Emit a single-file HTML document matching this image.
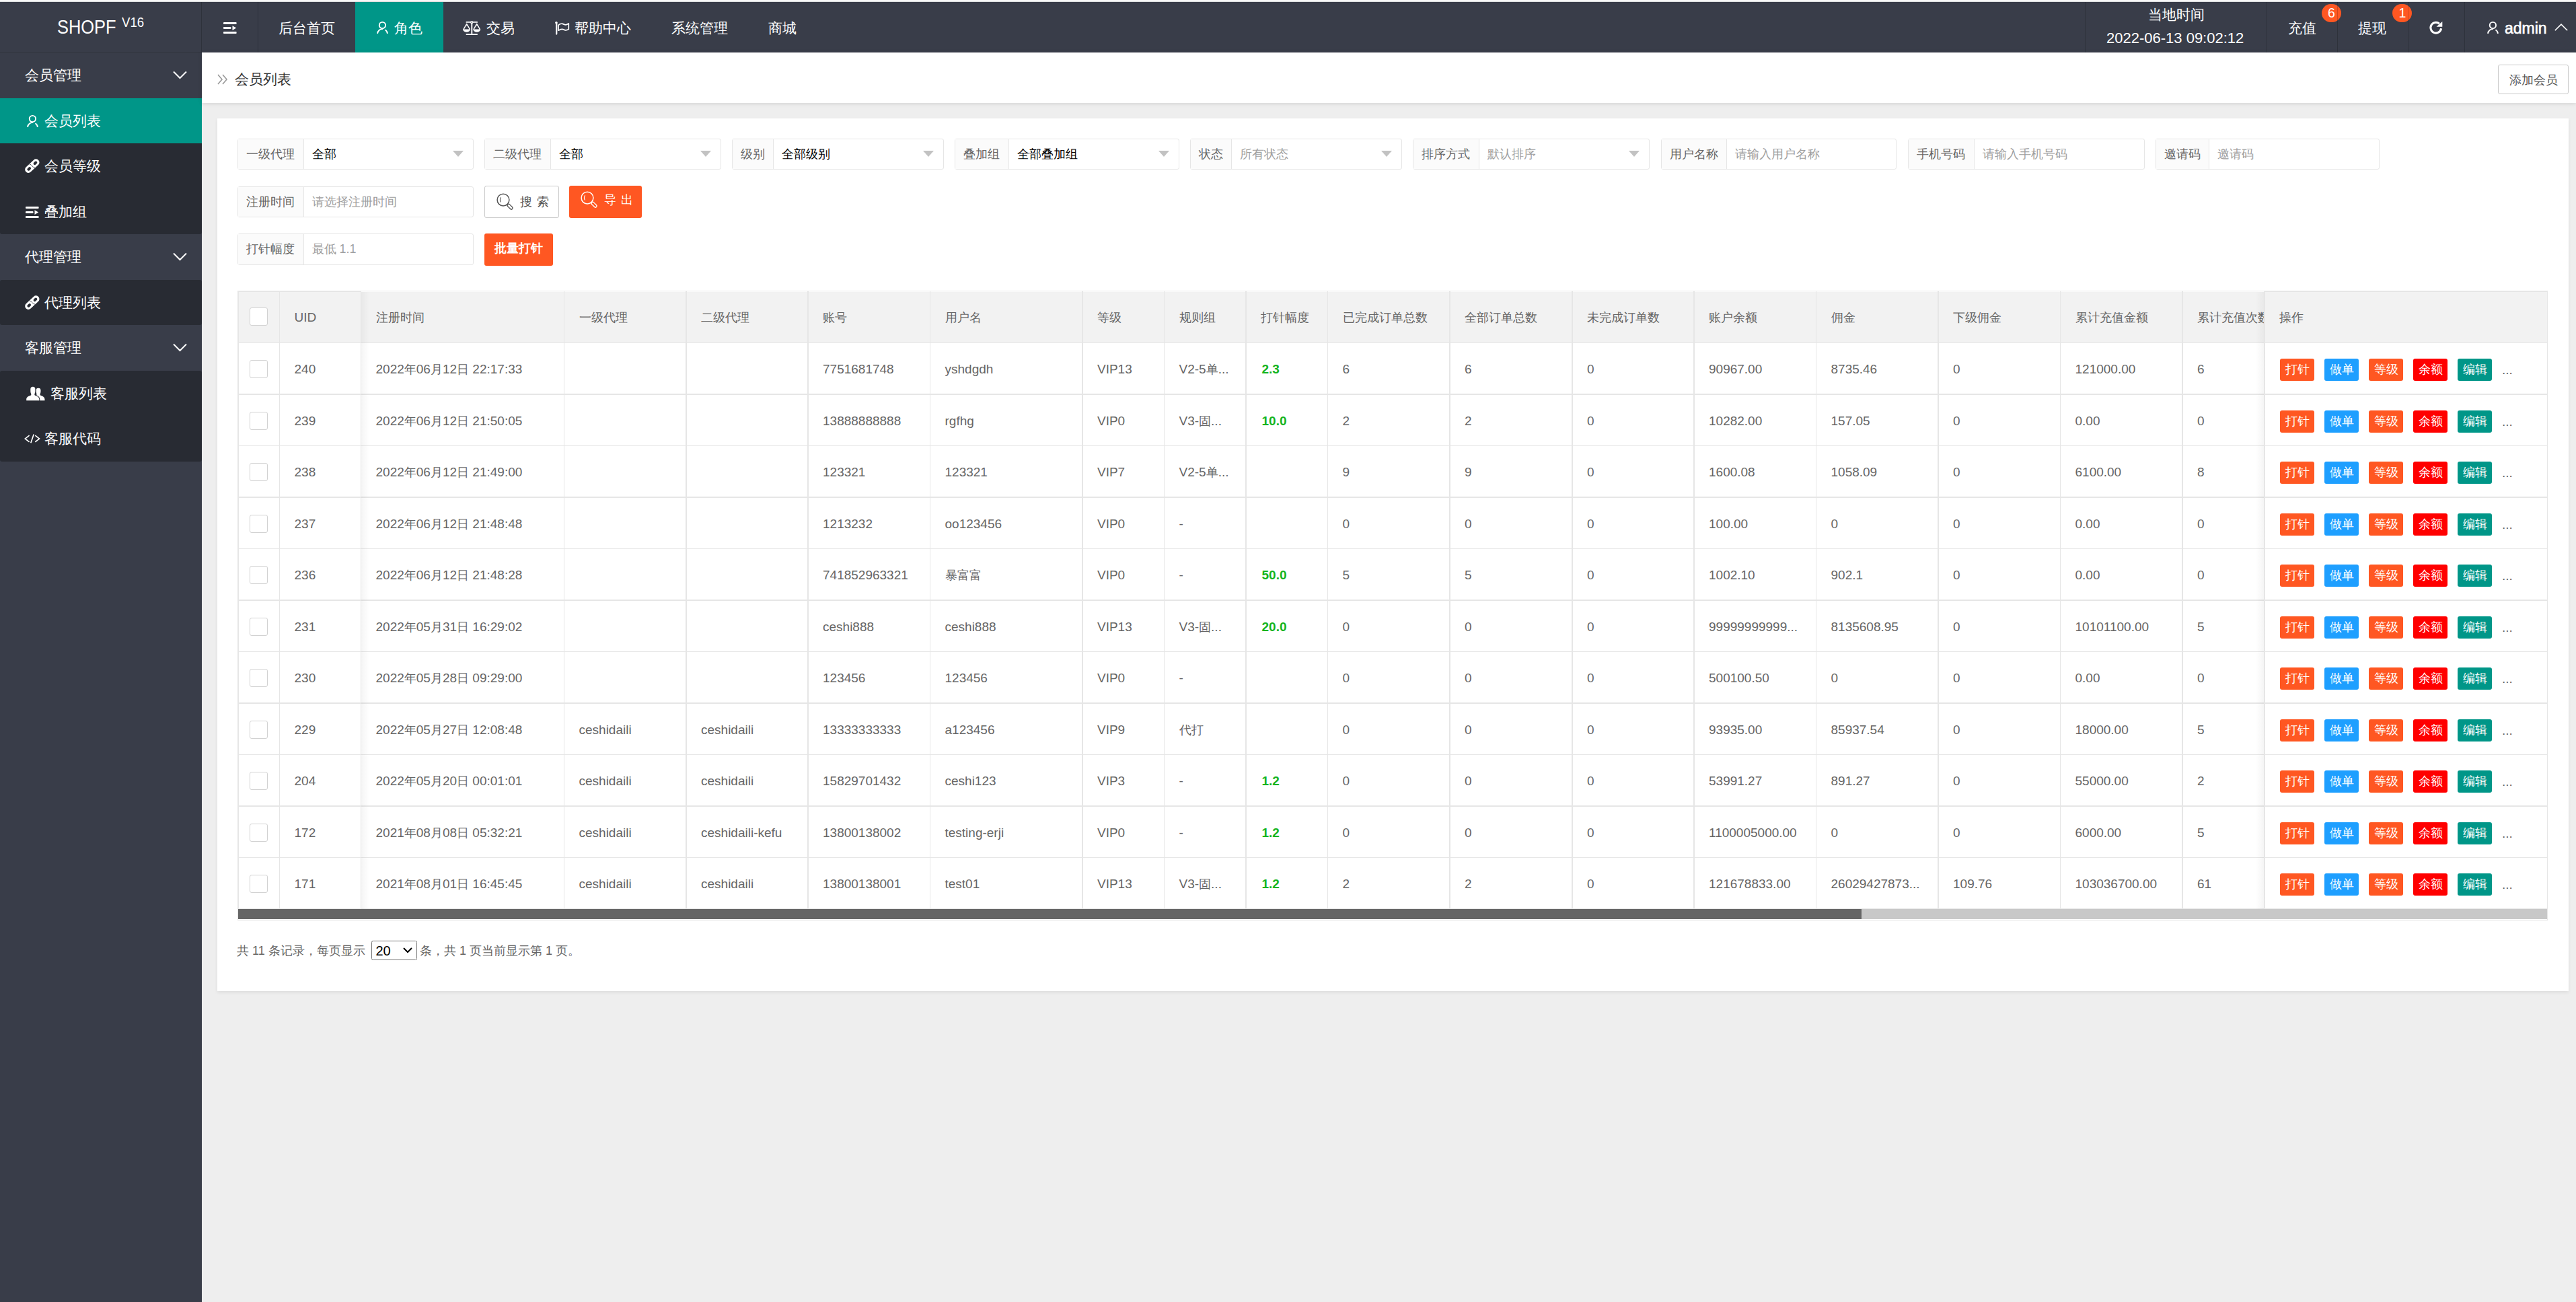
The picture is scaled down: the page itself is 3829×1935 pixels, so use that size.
<!DOCTYPE html><html><head><meta charset="utf-8"><title>会员列表</title><style>
*{margin:0;padding:0;box-sizing:border-box}
html,body{width:3829px;height:1935px;overflow:hidden;background:#EEEEEE;font-family:"Liberation Sans",sans-serif;position:relative}
.a{position:absolute}
.t{position:absolute;white-space:nowrap;line-height:1}
#topline{left:0;top:0;width:3829px;height:3px;background:linear-gradient(#fff 0,#fff 0.8px,#DCDDDF 1px,#E2E4E3 3px)}
#header{left:0;top:3px;width:3829px;height:75px;background:#393D49}
.hsep{position:absolute;top:0;width:1px;height:75px;background:rgba(0,0,0,.18);z-index:2}
.nav{color:#fff;font-size:21px}
#side{left:0;top:78px;width:300px;height:1857px;background:#393D49}
.sub{position:absolute;left:0;width:300px;background:#282B33;border-radius:3px}
.si{color:#fff;font-size:21px}
#crumb{left:300px;top:78px;width:3529px;height:74.5px;background:#fff;box-shadow:0 1px 6px rgba(0,0,0,.12)}
#card{left:322.5px;top:176px;width:3495.5px;height:1296.5px;background:#fff;box-shadow:0 2px 5px rgba(0,0,0,.08)}
.fb{position:absolute;height:46.5px;border:1.5px solid #E6E6E6;border-radius:3px;background:#fff}
.fl{position:absolute;left:0;top:0;height:100%;background:#FBFBFB;border-right:1.5px solid #E6E6E6;color:#666;font-size:18px}
.fv{position:absolute;font-size:18px;color:#000}
.ph{color:#A0A0A0}
.caret{position:absolute;width:0;height:0;border-left:8.5px solid transparent;border-right:8.5px solid transparent;border-top:9px solid #C2C2C2}
.btn{position:absolute;color:#fff;font-size:18px;border-radius:3px}
.cell{position:absolute;color:#666;font-size:19px;white-space:nowrap;line-height:1}
.zh{font-size:18px}
.vl{position:absolute;width:1.5px;background:#E6E6E6}
.hl{position:absolute;height:1.5px;background:#E6E6E6}
.cb{position:absolute;width:27px;height:27px;border:1.5px solid #D2D2D2;border-radius:3px;background:#fff}
.ob{position:absolute;width:51px;height:33px;border-radius:3px;color:#fff;font-size:18px;line-height:33px;text-align:center}
.green{color:#14B41E;font-weight:bold}
</style></head><body>
<div id="topline" class="a"></div>
<div id="header" class="a">
<div class="hsep" style="left:299px"></div>
<div class="hsep" style="left:383px"></div>
<div class="hsep" style="left:3099px"></div>
<div class="hsep" style="left:3369px"></div>
<div class="hsep" style="left:3474px"></div>
<div class="hsep" style="left:3579px"></div>
<div class="hsep" style="left:3663px"></div>
<div class="a" style="left:528px;top:0;width:131px;height:75px;background:#009688"></div>
<div class="a" style="left:0;top:73.5px;width:300px;height:1.5px;background:#2F333C"></div>
<div class="t" style="left:85.2px;top:22.7px;color:#fff;font-size:29.1px;transform:scaleX(0.874);transform-origin:0 0">SHOPF</div>
<div class="t" style="left:181px;top:20.6px;color:#fff;font-size:19.5px;transform:scaleX(0.955);transform-origin:0 0">V16</div>
<svg class="a" style="left:332.4px;top:29.8px" width="20" height="17.5" viewBox="0 0 20 17.5"><rect x="0" y="0" width="19.6" height="3" rx="1" fill="#fff"/><rect x="0" y="7.1" width="11.5" height="3" rx="1" fill="#fff"/><path d="M13.5 5.2 L19.2 8.6 L13.5 12Z" fill="#fff"/><rect x="0" y="14.1" width="19.6" height="3" rx="1" fill="#fff"/></svg>
<div class="t nav" style="left:414px;top:27.5px">后台首页</div>
<svg class="a" style="left:558px;top:28px" width="21" height="21" viewBox="-2 -1 21 21"><circle cx="8.4" cy="5.5" r="4.65" stroke="#fff" stroke-width="1.9" fill="none"/><path d="M1.04 17.8 A7.5 7.5 0 0 1 9.15 11.13 M12.47 12.24 A7.5 7.5 0 0 1 15.96 17.8" stroke="#fff" stroke-width="1.9" fill="none"/></svg>
<svg class="a" style="left:684px;top:25px" width="32" height="28" viewBox="0 0 32 28"><path d="M9.4 4.95 H25.2 M9.4 23.05 H25.2" stroke="#fff" stroke-width="1.7" stroke-linecap="round"/><circle cx="17.2" cy="5.1" r="1.5" stroke="#fff" stroke-width="1.4" fill="#393D49"/><path d="M17.3 6.6 V22.2" stroke="#fff" stroke-width="1.9"/><path d="M4.8 15.9 L9.7 7.6 L14.6 15.9 M19.8 15.9 L24.7 7.6 L29.6 15.9" stroke="#fff" stroke-width="1.5" fill="none" stroke-linejoin="round"/><path d="M4.1 15.5 H14.9 A5.4 4.3 0 0 1 4.1 15.5Z M19.4 15.5 H30.2 A5.4 4.3 0 0 1 19.4 15.5Z" fill="#fff"/></svg>
<svg class="a" style="left:820px;top:25px" width="32" height="28" viewBox="0 0 32 28"><path d="M7.2 6 V22.6" stroke="#fff" stroke-width="2.3" stroke-linecap="round"/><circle cx="6.9" cy="5.8" r="1.8" fill="#fff"/><path d="M10 9.3 C12 7.4 14 7.0 16 7.4 C18 7.8 19 8.9 21 8.8 C23 8.7 24 7.6 25.3 6.9 V15.4 C24 16.3 23 16.9 21 16.9 C19 16.9 18 15.3 15.6 15.3 C13.2 15.3 11.6 16.5 10 17.2 Z" stroke="#fff" stroke-width="1.7" fill="none" stroke-linejoin="round"/></svg>
<svg class="a" style="left:3606px;top:25px" width="30" height="28" viewBox="0 0 30 28"><path d="M22.57 14.29 A7.85 7.85 0 1 1 19.85 7.19" stroke="#fff" stroke-width="3.1" fill="none"/><path d="M24.3 3.9 V11.8 H15.5 Z" fill="#fff"/></svg>
<svg class="a" style="left:3694.5px;top:28px" width="21" height="21" viewBox="-2 -1 21 21"><circle cx="8.4" cy="5.5" r="4.65" stroke="#fff" stroke-width="1.9" fill="none"/><path d="M1.04 17.8 A7.5 7.5 0 0 1 9.15 11.13 M12.47 12.24 A7.5 7.5 0 0 1 15.96 17.8" stroke="#fff" stroke-width="1.9" fill="none"/></svg>
<svg class="a" style="left:3797px;top:31.5px" width="20" height="11" viewBox="0 0 20 11"><path d="M0.8 10.2 L10 1.2 L19.2 10.2" stroke="#fff" stroke-width="1.6" fill="none"/></svg>
<div class="t nav" style="left:586px;top:27.5px">角色</div>
<div class="t nav" style="left:723px;top:27.5px">交易</div>
<div class="t nav" style="left:854px;top:27.5px">帮助中心</div>
<div class="t nav" style="left:998px;top:27.5px">系统管理</div>
<div class="t nav" style="left:1142px;top:27.5px">商城</div>
<div class="t nav" style="left:3193px;top:7.5px">当地时间</div>
<div class="t nav" style="left:3131px;top:43px;font-size:22px">2022-06-13 09:02:12</div>
<div class="t nav" style="left:3401px;top:27.5px">充值</div>
<div class="t nav" style="left:3505px;top:27.5px">提现</div>
<div class="t nav" style="left:3723px;top:28px;font-size:23px;-webkit-text-stroke:0.6px #fff">admin</div>
<div class="a" style="left:3450.9px;top:2.9px;width:29.2px;height:27px;border-radius:13.5px;background:#FF5722;color:#fff;font-size:19.5px;line-height:27px;text-align:center">6</div>
<div class="a" style="left:3556.3px;top:2.9px;width:29.2px;height:27px;border-radius:13.5px;background:#FF5722;color:#fff;font-size:19.5px;line-height:27px;text-align:center">1</div>
</div>
<div id="side" class="a">
<div class="sub" style="top:67.5px;height:202.5px"></div>
<div class="a" style="left:0;top:67.5px;width:300px;height:67.5px;background:#009688"></div>
<div class="sub" style="top:337.5px;height:67.5px"></div>
<div class="sub" style="top:472.5px;height:135px"></div>
<div class="t si" style="left:37px;top:23.0px">会员管理</div>
<svg class="a" style="left:257px;top:27.0px" width="21" height="13" viewBox="0 0 21 13"><path d="M1 1.5 L10.5 11 L20 1.5" stroke="#fff" stroke-width="2" fill="none"/></svg>
<div class="t si" style="left:66px;top:90.5px">会员列表</div>
<div class="t si" style="left:66px;top:158.0px">会员等级</div>
<div class="t si" style="left:66px;top:225.5px">叠加组</div>
<div class="t si" style="left:37px;top:293.0px">代理管理</div>
<svg class="a" style="left:257px;top:297.0px" width="21" height="13" viewBox="0 0 21 13"><path d="M1 1.5 L10.5 11 L20 1.5" stroke="#fff" stroke-width="2" fill="none"/></svg>
<div class="t si" style="left:66px;top:360.5px">代理列表</div>
<div class="t si" style="left:37px;top:428.0px">客服管理</div>
<svg class="a" style="left:257px;top:432.0px" width="21" height="13" viewBox="0 0 21 13"><path d="M1 1.5 L10.5 11 L20 1.5" stroke="#fff" stroke-width="2" fill="none"/></svg>
<div class="t si" style="left:75px;top:495.5px">客服列表</div>
<div class="t si" style="left:66px;top:563.0px">客服代码</div>
<svg class="a" style="left:38px;top:91.6px" width="21" height="21" viewBox="-2 -1 21 21"><circle cx="8.4" cy="5.5" r="4.65" stroke="#fff" stroke-width="1.9" fill="none"/><path d="M1.04 17.8 A7.5 7.5 0 0 1 9.15 11.13 M12.47 12.24 A7.5 7.5 0 0 1 15.96 17.8" stroke="#fff" stroke-width="1.9" fill="none"/></svg>
<svg class="a" style="left:32px;top:152px" width="32" height="32" viewBox="0 0 32 32"><g transform="rotate(-43 15.85 16.6)"><rect x="3.1" y="11.6" width="25.5" height="10" rx="5" fill="#fff"/><rect x="6.4" y="14.6" width="6.2" height="4" rx="2" fill="#282B33"/><rect x="19.1" y="14.6" width="6.2" height="4" rx="2" fill="#282B33"/><path d="M14.6 11.9 C17.6 14.6 14.1 18.6 17.1 21.3" stroke="#3A3E48" stroke-width="0.8" fill="none"/></g></svg>
<svg class="a" style="left:38.3px;top:228.89999999999998px" width="20" height="17.5" viewBox="0 0 20 17.5"><rect x="0" y="0" width="19.6" height="3" rx="1" fill="#fff"/><rect x="0" y="7.1" width="11.5" height="3" rx="1" fill="#fff"/><path d="M13.5 5.2 L19.2 8.6 L13.5 12Z" fill="#fff"/><rect x="0" y="14.1" width="19.6" height="3" rx="1" fill="#fff"/></svg>
<svg class="a" style="left:32px;top:354.5px" width="32" height="32" viewBox="0 0 32 32"><g transform="rotate(-43 15.85 16.6)"><rect x="3.1" y="11.6" width="25.5" height="10" rx="5" fill="#fff"/><rect x="6.4" y="14.6" width="6.2" height="4" rx="2" fill="#282B33"/><rect x="19.1" y="14.6" width="6.2" height="4" rx="2" fill="#282B33"/><path d="M14.6 11.9 C17.6 14.6 14.1 18.6 17.1 21.3" stroke="#3A3E48" stroke-width="0.8" fill="none"/></g></svg>
<svg class="a" style="left:34px;top:492px" width="36" height="30" viewBox="0 0 36 30"><path d="M20.2 25.3 H32.5 V23.5 C32.5 20.5 30.4 19 26.6 17.8 C25.6 17.4 25.3 16.3 25.7 15.2 C26.3 14 26.5 12.5 26.5 10.5 V10.15 A3.45 3.45 0 0 0 19.6 10.15 V10.5 C19.6 12.5 19.9 14 20.4 15.2 Z" fill="#fff"/><path d="M5.2 25.3 V23.5 C5.2 20.5 7.5 19 11.3 17.8 C12.3 17.4 12.6 16.3 12.2 15.2 C11.6 14 11.3 12.5 11.3 10.5 V8.4 A3.55 3.55 0 0 1 18.4 8.4 V10.5 C18.4 12.5 18.1 14 17.5 15.2 C17.1 16.3 17.4 17.4 18.4 17.8 C22.2 19 24.3 20.5 24.3 23.5 V25.3 Z" fill="#fff" stroke="#282B33" stroke-width="2" paint-order="stroke"/></svg>
<svg class="a" style="left:34px;top:562px" width="30" height="25" viewBox="0 0 30 25"><path d="M9.6 7.1 L3.4 11.95 L9.6 16.8 M18.3 7.1 L24.5 11.95 L18.3 16.8 M16.2 5.4 L11.8 18.3" stroke="#fff" stroke-width="1.7" fill="none"/></svg>
</div>
<div id="crumb" class="a">
<svg class="a" style="left:23px;top:32px" width="16" height="16" viewBox="0 0 16 16"><path d="M1 1 L7 8 L1 15 M8 1 L14 8 L8 15" stroke="#999" stroke-width="1.6" fill="none"/></svg>
<div class="t" style="left:49px;top:29px;font-size:21px;color:#333">会员列表</div>
<div class="a" style="left:3413px;top:18px;width:105px;height:44px;border:1.5px solid #C9C9C9;border-radius:3px;color:#555;font-size:18px;line-height:44px;text-align:center">添加会员</div>
</div>
<div id="card" class="a"></div>
<div class="fb" style="left:353px;top:205.8px;width:351px;height:46.5px"><div class="fl" style="width:97.60000000000002px"><span class="t" style="left:12px;top:13px">一级代理</span></div><div class="t fv" style="left:109.60000000000002px;top:13px">全部</div><div class="caret" style="left:319px;top:17.5px"></div></div>
<div class="fb" style="left:720px;top:205.8px;width:352px;height:46.5px"><div class="fl" style="width:98px"><span class="t" style="left:12px;top:13px">二级代理</span></div><div class="t fv" style="left:110px;top:13px">全部</div><div class="caret" style="left:320px;top:17.5px"></div></div>
<div class="fb" style="left:1088px;top:205.8px;width:315px;height:46.5px"><div class="fl" style="width:61.40000000000009px"><span class="t" style="left:12px;top:13px">级别</span></div><div class="t fv" style="left:73.40000000000009px;top:13px">全部级别</div><div class="caret" style="left:283px;top:17.5px"></div></div>
<div class="fb" style="left:1419px;top:205.8px;width:334px;height:46.5px"><div class="fl" style="width:80px"><span class="t" style="left:12px;top:13px">叠加组</span></div><div class="t fv" style="left:92px;top:13px">全部叠加组</div><div class="caret" style="left:302px;top:17.5px"></div></div>
<div class="fb" style="left:1769px;top:205.8px;width:315px;height:46.5px"><div class="fl" style="width:61px"><span class="t" style="left:12px;top:13px">状态</span></div><div class="t fv ph" style="left:73px;top:13px">所有状态</div><div class="caret" style="left:283px;top:17.5px"></div></div>
<div class="fb" style="left:2100px;top:205.8px;width:352px;height:46.5px"><div class="fl" style="width:98px"><span class="t" style="left:12px;top:13px">排序方式</span></div><div class="t fv ph" style="left:110px;top:13px">默认排序</div><div class="caret" style="left:320px;top:17.5px"></div></div>
<div class="fb" style="left:2468.5px;top:205.8px;width:350.5px;height:46.5px"><div class="fl" style="width:97.5px"><span class="t" style="left:12px;top:13px">用户名称</span></div><div class="t fv ph" style="left:109.5px;top:13px">请输入用户名称</div></div>
<div class="fb" style="left:2835.5px;top:205.8px;width:352.5px;height:46.5px"><div class="fl" style="width:98.5px"><span class="t" style="left:12px;top:13px">手机号码</span></div><div class="t fv ph" style="left:110.5px;top:13px">请输入手机号码</div></div>
<div class="fb" style="left:3203.6px;top:205.8px;width:333.4000000000001px;height:46.5px"><div class="fl" style="width:79.40000000000009px"><span class="t" style="left:12px;top:13px">邀请码</span></div><div class="t fv ph" style="left:91.40000000000009px;top:13px">邀请码</div></div>
<div class="fb" style="left:353px;top:276.5px;width:351px;height:46.5px"><div class="fl" style="width:97.60000000000002px"><span class="t" style="left:12px;top:13px">注册时间</span></div><div class="t fv ph" style="left:109.60000000000002px;top:13px">请选择注册时间</div></div>
<div class="fb" style="left:353px;top:347px;width:351px;height:46.5px"><div class="fl" style="width:97.60000000000002px"><span class="t" style="left:12px;top:13px">打针幅度</span></div><div class="t fv ph" style="left:109.60000000000002px;top:13px">最低 1.1</div></div>
<div class="a" style="left:720px;top:276px;width:110.5px;height:47.5px;border:1.5px solid #C9C9C9;border-radius:3px;background:#fff"></div>
<svg class="a" style="left:733px;top:282px" width="32" height="32" viewBox="0 0 32 32"><circle cx="15" cy="15.1" r="8.9" stroke="#555" stroke-width="1.5" fill="none"/><path d="M11.7 11.3 Q9.2 14.9 11.4 18.5" stroke="#555" stroke-width="1.1" fill="none"/><rect x="20.35" y="23.2" width="9.5" height="4" rx="2" transform="rotate(45 25.1 25.2)" stroke="#555" stroke-width="1.3" fill="none"/></svg>
<div class="t" style="left:773px;top:291px;font-size:18px;color:#555;letter-spacing:7px">搜索</div>
<div class="btn" style="left:846px;top:276px;width:108px;height:48px;background:#FF5722"></div>
<svg class="a" style="left:858px;top:279.2px" width="32" height="32" viewBox="0 0 32 32"><circle cx="15" cy="15.1" r="8.9" stroke="#fff" stroke-width="1.5" fill="none"/><path d="M11.7 11.3 Q9.2 14.9 11.4 18.5" stroke="#fff" stroke-width="1.1" fill="none"/><rect x="20.35" y="23.2" width="9.5" height="4" rx="2" transform="rotate(45 25.1 25.2)" stroke="#fff" stroke-width="1.3" fill="none"/></svg>
<div class="t" style="left:898px;top:288px;font-size:18px;color:#fff;letter-spacing:7px">导出</div>
<div class="btn" style="left:720px;top:347px;width:102px;height:47.5px;background:#FF5722"></div>
<div class="t" style="left:735px;top:360px;font-size:18px;color:#fff;font-weight:bold">批量打针</div>
<div class="a" style="left:353px;top:434.2px;width:3434px;height:75.8px;background:#F2F2F2"></div>
<div class="a" style="left:353px;top:432px;width:3434px;height:935.5px;border:1.5px solid #E6E6E6"></div>
<div class="hl" style="left:353px;top:508.5px;width:3434px"></div>
<div class="hl" style="left:353px;top:585.0px;width:3434px"></div>
<div class="hl" style="left:353px;top:661.5px;width:3434px"></div>
<div class="hl" style="left:353px;top:738.0px;width:3434px"></div>
<div class="hl" style="left:353px;top:814.5px;width:3434px"></div>
<div class="hl" style="left:353px;top:891.0px;width:3434px"></div>
<div class="hl" style="left:353px;top:967.5px;width:3434px"></div>
<div class="hl" style="left:353px;top:1044.0px;width:3434px"></div>
<div class="hl" style="left:353px;top:1120.5px;width:3434px"></div>
<div class="hl" style="left:353px;top:1197.0px;width:3434px"></div>
<div class="hl" style="left:353px;top:1273.5px;width:3434px"></div>
<div class="hl" style="left:353px;top:1350.0px;width:3434px"></div>
<div class="vl" style="left:414.5px;top:432px;height:919.5px"></div>
<div class="vl" style="left:535.5px;top:432px;height:919.5px"></div>
<div class="vl" style="left:837.5px;top:432px;height:919.5px"></div>
<div class="vl" style="left:1019px;top:432px;height:919.5px"></div>
<div class="vl" style="left:1200px;top:432px;height:919.5px"></div>
<div class="vl" style="left:1381.5px;top:432px;height:919.5px"></div>
<div class="vl" style="left:1608px;top:432px;height:919.5px"></div>
<div class="vl" style="left:1729.5px;top:432px;height:919.5px"></div>
<div class="vl" style="left:1851px;top:432px;height:919.5px"></div>
<div class="vl" style="left:1972.5px;top:432px;height:919.5px"></div>
<div class="vl" style="left:2154px;top:432px;height:919.5px"></div>
<div class="vl" style="left:2336px;top:432px;height:919.5px"></div>
<div class="vl" style="left:2517px;top:432px;height:919.5px"></div>
<div class="vl" style="left:2698.5px;top:432px;height:919.5px"></div>
<div class="vl" style="left:2880px;top:432px;height:919.5px"></div>
<div class="vl" style="left:3061.5px;top:432px;height:919.5px"></div>
<div class="vl" style="left:3243px;top:432px;height:919.5px"></div>
<div class="cell" style="left:437.5px;top:462px">UID</div>
<div class="cell" style="left:558.5px;top:462px"><span class="zh">注册时间</span></div>
<div class="cell" style="left:860.5px;top:462px"><span class="zh">一级代理</span></div>
<div class="cell" style="left:1042px;top:462px"><span class="zh">二级代理</span></div>
<div class="cell" style="left:1223px;top:462px"><span class="zh">账号</span></div>
<div class="cell" style="left:1404.5px;top:462px"><span class="zh">用户名</span></div>
<div class="cell" style="left:1631px;top:462px"><span class="zh">等级</span></div>
<div class="cell" style="left:1752.5px;top:462px"><span class="zh">规则组</span></div>
<div class="cell" style="left:1874px;top:462px"><span class="zh">打针幅度</span></div>
<div class="cell" style="left:1995.5px;top:462px"><span class="zh">已完成订单总数</span></div>
<div class="cell" style="left:2177px;top:462px"><span class="zh">全部订单总数</span></div>
<div class="cell" style="left:2359px;top:462px"><span class="zh">未完成订单数</span></div>
<div class="cell" style="left:2540px;top:462px"><span class="zh">账户余额</span></div>
<div class="cell" style="left:2721.5px;top:462px"><span class="zh">佣金</span></div>
<div class="cell" style="left:2903px;top:462px"><span class="zh">下级佣金</span></div>
<div class="cell" style="left:3084.5px;top:462px"><span class="zh">累计充值金额</span></div>
<div class="cell" style="left:3266px;top:462px"><span class="zh">累计充值次数</span></div>
<div class="cell" style="left:437.5px;top:539.3px">240</div>
<div class="cell" style="left:558.5px;top:539.3px">2022<span class="zh">年</span>06<span class="zh">月</span>12<span class="zh">日</span> 22:17:33</div>
<div class="cell" style="left:1223px;top:539.3px">7751681748</div>
<div class="cell" style="left:1404.5px;top:539.3px">yshdgdh</div>
<div class="cell" style="left:1631px;top:539.3px">VIP13</div>
<div class="cell" style="left:1752.5px;top:539.3px">V2-5<span class="zh">单</span>...</div>
<div class="cell green" style="left:1875.5px;top:539.3px">2.3</div>
<div class="cell" style="left:1995.5px;top:539.3px">6</div>
<div class="cell" style="left:2177px;top:539.3px">6</div>
<div class="cell" style="left:2359px;top:539.3px">0</div>
<div class="cell" style="left:2540px;top:539.3px">90967.00</div>
<div class="cell" style="left:2721.5px;top:539.3px">8735.46</div>
<div class="cell" style="left:2903px;top:539.3px">0</div>
<div class="cell" style="left:3084.5px;top:539.3px">121000.00</div>
<div class="cell" style="left:3266px;top:539.3px">6</div>
<div class="cell" style="left:437.5px;top:615.8px">239</div>
<div class="cell" style="left:558.5px;top:615.8px">2022<span class="zh">年</span>06<span class="zh">月</span>12<span class="zh">日</span> 21:50:05</div>
<div class="cell" style="left:1223px;top:615.8px">13888888888</div>
<div class="cell" style="left:1404.5px;top:615.8px">rgfhg</div>
<div class="cell" style="left:1631px;top:615.8px">VIP0</div>
<div class="cell" style="left:1752.5px;top:615.8px">V3-<span class="zh">固</span>...</div>
<div class="cell green" style="left:1875.5px;top:615.8px">10.0</div>
<div class="cell" style="left:1995.5px;top:615.8px">2</div>
<div class="cell" style="left:2177px;top:615.8px">2</div>
<div class="cell" style="left:2359px;top:615.8px">0</div>
<div class="cell" style="left:2540px;top:615.8px">10282.00</div>
<div class="cell" style="left:2721.5px;top:615.8px">157.05</div>
<div class="cell" style="left:2903px;top:615.8px">0</div>
<div class="cell" style="left:3084.5px;top:615.8px">0.00</div>
<div class="cell" style="left:3266px;top:615.8px">0</div>
<div class="cell" style="left:437.5px;top:692.3px">238</div>
<div class="cell" style="left:558.5px;top:692.3px">2022<span class="zh">年</span>06<span class="zh">月</span>12<span class="zh">日</span> 21:49:00</div>
<div class="cell" style="left:1223px;top:692.3px">123321</div>
<div class="cell" style="left:1404.5px;top:692.3px">123321</div>
<div class="cell" style="left:1631px;top:692.3px">VIP7</div>
<div class="cell" style="left:1752.5px;top:692.3px">V2-5<span class="zh">单</span>...</div>
<div class="cell" style="left:1995.5px;top:692.3px">9</div>
<div class="cell" style="left:2177px;top:692.3px">9</div>
<div class="cell" style="left:2359px;top:692.3px">0</div>
<div class="cell" style="left:2540px;top:692.3px">1600.08</div>
<div class="cell" style="left:2721.5px;top:692.3px">1058.09</div>
<div class="cell" style="left:2903px;top:692.3px">0</div>
<div class="cell" style="left:3084.5px;top:692.3px">6100.00</div>
<div class="cell" style="left:3266px;top:692.3px">8</div>
<div class="cell" style="left:437.5px;top:768.8px">237</div>
<div class="cell" style="left:558.5px;top:768.8px">2022<span class="zh">年</span>06<span class="zh">月</span>12<span class="zh">日</span> 21:48:48</div>
<div class="cell" style="left:1223px;top:768.8px">1213232</div>
<div class="cell" style="left:1404.5px;top:768.8px">oo123456</div>
<div class="cell" style="left:1631px;top:768.8px">VIP0</div>
<div class="cell" style="left:1752.5px;top:768.8px">-</div>
<div class="cell" style="left:1995.5px;top:768.8px">0</div>
<div class="cell" style="left:2177px;top:768.8px">0</div>
<div class="cell" style="left:2359px;top:768.8px">0</div>
<div class="cell" style="left:2540px;top:768.8px">100.00</div>
<div class="cell" style="left:2721.5px;top:768.8px">0</div>
<div class="cell" style="left:2903px;top:768.8px">0</div>
<div class="cell" style="left:3084.5px;top:768.8px">0.00</div>
<div class="cell" style="left:3266px;top:768.8px">0</div>
<div class="cell" style="left:437.5px;top:845.3px">236</div>
<div class="cell" style="left:558.5px;top:845.3px">2022<span class="zh">年</span>06<span class="zh">月</span>12<span class="zh">日</span> 21:48:28</div>
<div class="cell" style="left:1223px;top:845.3px">741852963321</div>
<div class="cell" style="left:1404.5px;top:845.3px"><span class="zh">暴富富</span></div>
<div class="cell" style="left:1631px;top:845.3px">VIP0</div>
<div class="cell" style="left:1752.5px;top:845.3px">-</div>
<div class="cell green" style="left:1875.5px;top:845.3px">50.0</div>
<div class="cell" style="left:1995.5px;top:845.3px">5</div>
<div class="cell" style="left:2177px;top:845.3px">5</div>
<div class="cell" style="left:2359px;top:845.3px">0</div>
<div class="cell" style="left:2540px;top:845.3px">1002.10</div>
<div class="cell" style="left:2721.5px;top:845.3px">902.1</div>
<div class="cell" style="left:2903px;top:845.3px">0</div>
<div class="cell" style="left:3084.5px;top:845.3px">0.00</div>
<div class="cell" style="left:3266px;top:845.3px">0</div>
<div class="cell" style="left:437.5px;top:921.8px">231</div>
<div class="cell" style="left:558.5px;top:921.8px">2022<span class="zh">年</span>05<span class="zh">月</span>31<span class="zh">日</span> 16:29:02</div>
<div class="cell" style="left:1223px;top:921.8px">ceshi888</div>
<div class="cell" style="left:1404.5px;top:921.8px">ceshi888</div>
<div class="cell" style="left:1631px;top:921.8px">VIP13</div>
<div class="cell" style="left:1752.5px;top:921.8px">V3-<span class="zh">固</span>...</div>
<div class="cell green" style="left:1875.5px;top:921.8px">20.0</div>
<div class="cell" style="left:1995.5px;top:921.8px">0</div>
<div class="cell" style="left:2177px;top:921.8px">0</div>
<div class="cell" style="left:2359px;top:921.8px">0</div>
<div class="cell" style="left:2540px;top:921.8px">99999999999...</div>
<div class="cell" style="left:2721.5px;top:921.8px">8135608.95</div>
<div class="cell" style="left:2903px;top:921.8px">0</div>
<div class="cell" style="left:3084.5px;top:921.8px">10101100.00</div>
<div class="cell" style="left:3266px;top:921.8px">5</div>
<div class="cell" style="left:437.5px;top:998.3px">230</div>
<div class="cell" style="left:558.5px;top:998.3px">2022<span class="zh">年</span>05<span class="zh">月</span>28<span class="zh">日</span> 09:29:00</div>
<div class="cell" style="left:1223px;top:998.3px">123456</div>
<div class="cell" style="left:1404.5px;top:998.3px">123456</div>
<div class="cell" style="left:1631px;top:998.3px">VIP0</div>
<div class="cell" style="left:1752.5px;top:998.3px">-</div>
<div class="cell" style="left:1995.5px;top:998.3px">0</div>
<div class="cell" style="left:2177px;top:998.3px">0</div>
<div class="cell" style="left:2359px;top:998.3px">0</div>
<div class="cell" style="left:2540px;top:998.3px">500100.50</div>
<div class="cell" style="left:2721.5px;top:998.3px">0</div>
<div class="cell" style="left:2903px;top:998.3px">0</div>
<div class="cell" style="left:3084.5px;top:998.3px">0.00</div>
<div class="cell" style="left:3266px;top:998.3px">0</div>
<div class="cell" style="left:437.5px;top:1074.8px">229</div>
<div class="cell" style="left:558.5px;top:1074.8px">2022<span class="zh">年</span>05<span class="zh">月</span>27<span class="zh">日</span> 12:08:48</div>
<div class="cell" style="left:860.5px;top:1074.8px">ceshidaili</div>
<div class="cell" style="left:1042px;top:1074.8px">ceshidaili</div>
<div class="cell" style="left:1223px;top:1074.8px">13333333333</div>
<div class="cell" style="left:1404.5px;top:1074.8px">a123456</div>
<div class="cell" style="left:1631px;top:1074.8px">VIP9</div>
<div class="cell" style="left:1752.5px;top:1074.8px"><span class="zh">代打</span></div>
<div class="cell" style="left:1995.5px;top:1074.8px">0</div>
<div class="cell" style="left:2177px;top:1074.8px">0</div>
<div class="cell" style="left:2359px;top:1074.8px">0</div>
<div class="cell" style="left:2540px;top:1074.8px">93935.00</div>
<div class="cell" style="left:2721.5px;top:1074.8px">85937.54</div>
<div class="cell" style="left:2903px;top:1074.8px">0</div>
<div class="cell" style="left:3084.5px;top:1074.8px">18000.00</div>
<div class="cell" style="left:3266px;top:1074.8px">5</div>
<div class="cell" style="left:437.5px;top:1151.3px">204</div>
<div class="cell" style="left:558.5px;top:1151.3px">2022<span class="zh">年</span>05<span class="zh">月</span>20<span class="zh">日</span> 00:01:01</div>
<div class="cell" style="left:860.5px;top:1151.3px">ceshidaili</div>
<div class="cell" style="left:1042px;top:1151.3px">ceshidaili</div>
<div class="cell" style="left:1223px;top:1151.3px">15829701432</div>
<div class="cell" style="left:1404.5px;top:1151.3px">ceshi123</div>
<div class="cell" style="left:1631px;top:1151.3px">VIP3</div>
<div class="cell" style="left:1752.5px;top:1151.3px">-</div>
<div class="cell green" style="left:1875.5px;top:1151.3px">1.2</div>
<div class="cell" style="left:1995.5px;top:1151.3px">0</div>
<div class="cell" style="left:2177px;top:1151.3px">0</div>
<div class="cell" style="left:2359px;top:1151.3px">0</div>
<div class="cell" style="left:2540px;top:1151.3px">53991.27</div>
<div class="cell" style="left:2721.5px;top:1151.3px">891.27</div>
<div class="cell" style="left:2903px;top:1151.3px">0</div>
<div class="cell" style="left:3084.5px;top:1151.3px">55000.00</div>
<div class="cell" style="left:3266px;top:1151.3px">2</div>
<div class="cell" style="left:437.5px;top:1227.8px">172</div>
<div class="cell" style="left:558.5px;top:1227.8px">2021<span class="zh">年</span>08<span class="zh">月</span>08<span class="zh">日</span> 05:32:21</div>
<div class="cell" style="left:860.5px;top:1227.8px">ceshidaili</div>
<div class="cell" style="left:1042px;top:1227.8px">ceshidaili-kefu</div>
<div class="cell" style="left:1223px;top:1227.8px">13800138002</div>
<div class="cell" style="left:1404.5px;top:1227.8px">testing-erji</div>
<div class="cell" style="left:1631px;top:1227.8px">VIP0</div>
<div class="cell" style="left:1752.5px;top:1227.8px">-</div>
<div class="cell green" style="left:1875.5px;top:1227.8px">1.2</div>
<div class="cell" style="left:1995.5px;top:1227.8px">0</div>
<div class="cell" style="left:2177px;top:1227.8px">0</div>
<div class="cell" style="left:2359px;top:1227.8px">0</div>
<div class="cell" style="left:2540px;top:1227.8px">1100005000.00</div>
<div class="cell" style="left:2721.5px;top:1227.8px">0</div>
<div class="cell" style="left:2903px;top:1227.8px">0</div>
<div class="cell" style="left:3084.5px;top:1227.8px">6000.00</div>
<div class="cell" style="left:3266px;top:1227.8px">5</div>
<div class="cell" style="left:437.5px;top:1304.3px">171</div>
<div class="cell" style="left:558.5px;top:1304.3px">2021<span class="zh">年</span>08<span class="zh">月</span>01<span class="zh">日</span> 16:45:45</div>
<div class="cell" style="left:860.5px;top:1304.3px">ceshidaili</div>
<div class="cell" style="left:1042px;top:1304.3px">ceshidaili</div>
<div class="cell" style="left:1223px;top:1304.3px">13800138001</div>
<div class="cell" style="left:1404.5px;top:1304.3px">test01</div>
<div class="cell" style="left:1631px;top:1304.3px">VIP13</div>
<div class="cell" style="left:1752.5px;top:1304.3px">V3-<span class="zh">固</span>...</div>
<div class="cell green" style="left:1875.5px;top:1304.3px">1.2</div>
<div class="cell" style="left:1995.5px;top:1304.3px">2</div>
<div class="cell" style="left:2177px;top:1304.3px">2</div>
<div class="cell" style="left:2359px;top:1304.3px">0</div>
<div class="cell" style="left:2540px;top:1304.3px">121678833.00</div>
<div class="cell" style="left:2721.5px;top:1304.3px">26029427873...</div>
<div class="cell" style="left:2903px;top:1304.3px">109.76</div>
<div class="cell" style="left:3084.5px;top:1304.3px">103036700.00</div>
<div class="cell" style="left:3266px;top:1304.3px">61</div>
<div class="a" style="left:353px;top:432px;width:182.5px;height:919.5px;background:#fff"></div>
<div class="a" style="left:537.0px;top:434.2px;width:12px;height:917.0px;background:linear-gradient(to right,rgba(0,0,0,.04),rgba(0,0,0,0))"></div>
<div class="a" style="left:353px;top:432px;width:182.5px;height:1.5px;background:#E6E6E6"></div>
<div class="a" style="left:353px;top:434.2px;width:182.5px;height:75.8px;background:#F2F2F2"></div>
<div class="hl" style="left:353px;top:508.5px;width:182.5px"></div>
<div class="hl" style="left:353px;top:585.0px;width:182.5px"></div>
<div class="hl" style="left:353px;top:661.5px;width:182.5px"></div>
<div class="hl" style="left:353px;top:738.0px;width:182.5px"></div>
<div class="hl" style="left:353px;top:814.5px;width:182.5px"></div>
<div class="hl" style="left:353px;top:891.0px;width:182.5px"></div>
<div class="hl" style="left:353px;top:967.5px;width:182.5px"></div>
<div class="hl" style="left:353px;top:1044.0px;width:182.5px"></div>
<div class="hl" style="left:353px;top:1120.5px;width:182.5px"></div>
<div class="hl" style="left:353px;top:1197.0px;width:182.5px"></div>
<div class="hl" style="left:353px;top:1273.5px;width:182.5px"></div>
<div class="hl" style="left:353px;top:1350.0px;width:182.5px"></div>
<div class="vl" style="left:353px;top:432px;height:919.5px"></div>
<div class="vl" style="left:414.5px;top:432px;height:919.5px"></div>
<div class="vl" style="left:535.5px;top:432px;height:919.5px"></div>
<div class="cb" style="left:371px;top:457px"></div>
<div class="cell" style="left:437.5px;top:462px">UID</div>
<div class="cb" style="left:371px;top:535.0px"></div>
<div class="cell" style="left:437.5px;top:539.3px">240</div>
<div class="cb" style="left:371px;top:611.5px"></div>
<div class="cell" style="left:437.5px;top:615.8px">239</div>
<div class="cb" style="left:371px;top:688.0px"></div>
<div class="cell" style="left:437.5px;top:692.3px">238</div>
<div class="cb" style="left:371px;top:764.5px"></div>
<div class="cell" style="left:437.5px;top:768.8px">237</div>
<div class="cb" style="left:371px;top:841.0px"></div>
<div class="cell" style="left:437.5px;top:845.3px">236</div>
<div class="cb" style="left:371px;top:917.5px"></div>
<div class="cell" style="left:437.5px;top:921.8px">231</div>
<div class="cb" style="left:371px;top:994.0px"></div>
<div class="cell" style="left:437.5px;top:998.3px">230</div>
<div class="cb" style="left:371px;top:1070.5px"></div>
<div class="cell" style="left:437.5px;top:1074.8px">229</div>
<div class="cb" style="left:371px;top:1147.0px"></div>
<div class="cell" style="left:437.5px;top:1151.3px">204</div>
<div class="cb" style="left:371px;top:1223.5px"></div>
<div class="cell" style="left:437.5px;top:1227.8px">172</div>
<div class="cb" style="left:371px;top:1300.0px"></div>
<div class="cell" style="left:437.5px;top:1304.3px">171</div>
<div class="a" style="left:3365px;top:432px;width:422px;height:919.5px;background:#fff"></div>
<div class="a" style="left:3353px;top:434.2px;width:12px;height:917.0px;background:linear-gradient(to left,rgba(0,0,0,.04),rgba(0,0,0,0))"></div>
<div class="a" style="left:3365px;top:432px;width:422px;height:1.5px;background:#E6E6E6"></div>
<div class="a" style="left:3365px;top:434.2px;width:422px;height:75.8px;background:#F2F2F2"></div>
<div class="hl" style="left:3365px;top:508.5px;width:422px"></div>
<div class="hl" style="left:3365px;top:585.0px;width:422px"></div>
<div class="hl" style="left:3365px;top:661.5px;width:422px"></div>
<div class="hl" style="left:3365px;top:738.0px;width:422px"></div>
<div class="hl" style="left:3365px;top:814.5px;width:422px"></div>
<div class="hl" style="left:3365px;top:891.0px;width:422px"></div>
<div class="hl" style="left:3365px;top:967.5px;width:422px"></div>
<div class="hl" style="left:3365px;top:1044.0px;width:422px"></div>
<div class="hl" style="left:3365px;top:1120.5px;width:422px"></div>
<div class="hl" style="left:3365px;top:1197.0px;width:422px"></div>
<div class="hl" style="left:3365px;top:1273.5px;width:422px"></div>
<div class="hl" style="left:3365px;top:1350.0px;width:422px"></div>
<div class="vl" style="left:3365px;top:432px;height:919.5px"></div>
<div class="vl" style="left:3785.5px;top:432px;height:919.5px"></div>
<div class="cell" style="left:3388px;top:462px"><span class="zh">操作</span></div>
<div class="ob" style="left:3389px;top:533.0px;background:#FF5722">打针</div>
<div class="ob" style="left:3455px;top:533.0px;background:#1E9FFF">做单</div>
<div class="ob" style="left:3521px;top:533.0px;background:#FF5722">等级</div>
<div class="ob" style="left:3587px;top:533.0px;background:#FF0000">余额</div>
<div class="ob" style="left:3653px;top:533.0px;background:#009688">编辑</div>
<div class="cell" style="left:3719px;top:540.0px">...</div>
<div class="ob" style="left:3389px;top:609.5px;background:#FF5722">打针</div>
<div class="ob" style="left:3455px;top:609.5px;background:#1E9FFF">做单</div>
<div class="ob" style="left:3521px;top:609.5px;background:#FF5722">等级</div>
<div class="ob" style="left:3587px;top:609.5px;background:#FF0000">余额</div>
<div class="ob" style="left:3653px;top:609.5px;background:#009688">编辑</div>
<div class="cell" style="left:3719px;top:616.5px">...</div>
<div class="ob" style="left:3389px;top:686.0px;background:#FF5722">打针</div>
<div class="ob" style="left:3455px;top:686.0px;background:#1E9FFF">做单</div>
<div class="ob" style="left:3521px;top:686.0px;background:#FF5722">等级</div>
<div class="ob" style="left:3587px;top:686.0px;background:#FF0000">余额</div>
<div class="ob" style="left:3653px;top:686.0px;background:#009688">编辑</div>
<div class="cell" style="left:3719px;top:693.0px">...</div>
<div class="ob" style="left:3389px;top:762.5px;background:#FF5722">打针</div>
<div class="ob" style="left:3455px;top:762.5px;background:#1E9FFF">做单</div>
<div class="ob" style="left:3521px;top:762.5px;background:#FF5722">等级</div>
<div class="ob" style="left:3587px;top:762.5px;background:#FF0000">余额</div>
<div class="ob" style="left:3653px;top:762.5px;background:#009688">编辑</div>
<div class="cell" style="left:3719px;top:769.5px">...</div>
<div class="ob" style="left:3389px;top:839.0px;background:#FF5722">打针</div>
<div class="ob" style="left:3455px;top:839.0px;background:#1E9FFF">做单</div>
<div class="ob" style="left:3521px;top:839.0px;background:#FF5722">等级</div>
<div class="ob" style="left:3587px;top:839.0px;background:#FF0000">余额</div>
<div class="ob" style="left:3653px;top:839.0px;background:#009688">编辑</div>
<div class="cell" style="left:3719px;top:846.0px">...</div>
<div class="ob" style="left:3389px;top:915.5px;background:#FF5722">打针</div>
<div class="ob" style="left:3455px;top:915.5px;background:#1E9FFF">做单</div>
<div class="ob" style="left:3521px;top:915.5px;background:#FF5722">等级</div>
<div class="ob" style="left:3587px;top:915.5px;background:#FF0000">余额</div>
<div class="ob" style="left:3653px;top:915.5px;background:#009688">编辑</div>
<div class="cell" style="left:3719px;top:922.5px">...</div>
<div class="ob" style="left:3389px;top:992.0px;background:#FF5722">打针</div>
<div class="ob" style="left:3455px;top:992.0px;background:#1E9FFF">做单</div>
<div class="ob" style="left:3521px;top:992.0px;background:#FF5722">等级</div>
<div class="ob" style="left:3587px;top:992.0px;background:#FF0000">余额</div>
<div class="ob" style="left:3653px;top:992.0px;background:#009688">编辑</div>
<div class="cell" style="left:3719px;top:999.0px">...</div>
<div class="ob" style="left:3389px;top:1068.5px;background:#FF5722">打针</div>
<div class="ob" style="left:3455px;top:1068.5px;background:#1E9FFF">做单</div>
<div class="ob" style="left:3521px;top:1068.5px;background:#FF5722">等级</div>
<div class="ob" style="left:3587px;top:1068.5px;background:#FF0000">余额</div>
<div class="ob" style="left:3653px;top:1068.5px;background:#009688">编辑</div>
<div class="cell" style="left:3719px;top:1075.5px">...</div>
<div class="ob" style="left:3389px;top:1145.0px;background:#FF5722">打针</div>
<div class="ob" style="left:3455px;top:1145.0px;background:#1E9FFF">做单</div>
<div class="ob" style="left:3521px;top:1145.0px;background:#FF5722">等级</div>
<div class="ob" style="left:3587px;top:1145.0px;background:#FF0000">余额</div>
<div class="ob" style="left:3653px;top:1145.0px;background:#009688">编辑</div>
<div class="cell" style="left:3719px;top:1152.0px">...</div>
<div class="ob" style="left:3389px;top:1221.5px;background:#FF5722">打针</div>
<div class="ob" style="left:3455px;top:1221.5px;background:#1E9FFF">做单</div>
<div class="ob" style="left:3521px;top:1221.5px;background:#FF5722">等级</div>
<div class="ob" style="left:3587px;top:1221.5px;background:#FF0000">余额</div>
<div class="ob" style="left:3653px;top:1221.5px;background:#009688">编辑</div>
<div class="cell" style="left:3719px;top:1228.5px">...</div>
<div class="ob" style="left:3389px;top:1298.0px;background:#FF5722">打针</div>
<div class="ob" style="left:3455px;top:1298.0px;background:#1E9FFF">做单</div>
<div class="ob" style="left:3521px;top:1298.0px;background:#FF5722">等级</div>
<div class="ob" style="left:3587px;top:1298.0px;background:#FF0000">余额</div>
<div class="ob" style="left:3653px;top:1298.0px;background:#009688">编辑</div>
<div class="cell" style="left:3719px;top:1305.0px">...</div>
<div class="a" style="left:354px;top:1351px;width:3432px;height:15px;background:#C8C8C8"></div>
<div class="a" style="left:354px;top:1351px;width:2413px;height:15px;background:#666"></div>
<div class="t" style="left:352px;top:1404px;font-size:18px;color:#666">共 11 条记录，每页显示</div>
<div class="a" style="left:552px;top:1398px;width:68px;height:29px;border:1.5px solid #767676;border-radius:2.5px;background:#fff"></div>
<div class="t" style="left:558.5px;top:1402.5px;font-size:20px;color:#000">20</div>
<svg class="a" style="left:599px;top:1408px" width="14" height="9" viewBox="0 0 14 9"><path d="M1 1 L7 7 L13 1" stroke="#000" stroke-width="2" fill="none"/></svg>
<div class="t" style="left:624px;top:1404px;font-size:18px;color:#666">条，共 1 页当前显示第 1 页。</div>
</body></html>
